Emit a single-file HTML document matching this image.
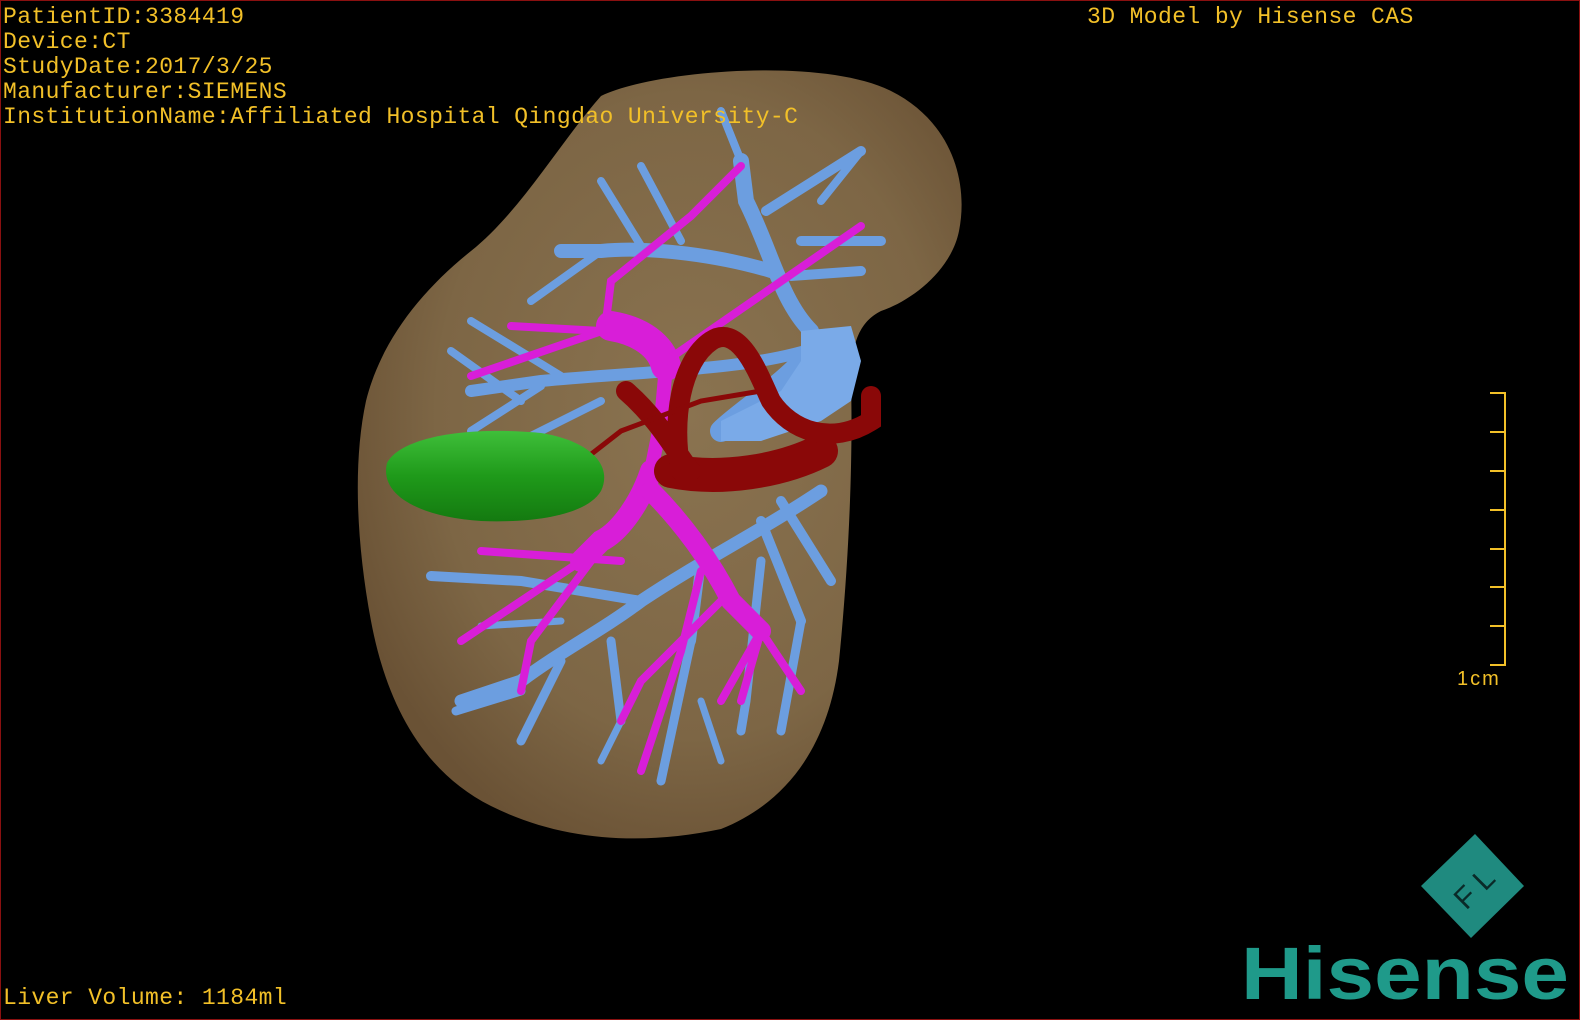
<!DOCTYPE html>
<html><head><meta charset="utf-8"><style>
html,body{margin:0;padding:0;background:#000;width:1580px;height:1020px;overflow:hidden}
.wrap{position:relative;width:1578px;height:1018px;border:1px solid #8a1010;background:#000}
.t{position:absolute;left:2px;color:#f2c028;font:23px/25px "Liberation Mono","DejaVu Sans Mono",monospace;letter-spacing:0.4px;white-space:pre}
svg{position:absolute;left:0;top:0}
</style></head><body><div class="wrap">
<svg width="1578" height="1018" viewBox="0 0 1578 1018">
<defs>
<radialGradient id="lv" cx="0.55" cy="0.45" r="0.6"><stop offset="0" stop-color="#8a7350"/><stop offset="0.7" stop-color="#7d6645"/><stop offset="1" stop-color="#6a5235"/></radialGradient>
<linearGradient id="gb" x1="0" y1="0" x2="0" y2="1"><stop offset="0" stop-color="#3fbf3a"/><stop offset="0.5" stop-color="#1f9a1a"/><stop offset="1" stop-color="#147a10"/></linearGradient>
</defs>
<path fill="url(#lv)" d="M600,95 C650,70 820,55 890,90 C950,120 968,180 958,230 C950,270 910,300 880,310 C860,320 850,340 850,380 C852,460 848,560 838,660 C828,740 790,800 720,828 C640,845 560,840 490,805 C420,770 385,700 370,620 C355,540 352,460 365,400 C380,340 420,290 470,250 C520,210 560,140 600,95 Z"/>
<g fill="none" stroke="#6c9ee0" stroke-linecap="round">
<path stroke-width="16" d="M810,330 C780,300 770,250 745,200 L740,160"/>
<path stroke-width="14" d="M770,270 C720,255 650,245 600,250 L560,250"/>
<path stroke-width="10" d="M765,210 L860,150 M800,240 L880,240 M790,275 L860,270"/>
<path stroke-width="8" d="M600,250 L530,300 M640,245 L600,180 M680,240 L640,165 M740,160 L720,110 M820,200 L860,150"/>
<path stroke-width="22" d="M820,340 C790,380 740,410 720,430"/>
<path stroke-width="12" d="M820,345 C750,370 640,370 540,380 L470,390"/>
<path stroke-width="8" d="M560,375 L470,320 M520,400 L450,350 M540,385 L470,430 M600,400 L520,440"/>
<path stroke-width="13" d="M820,490 C760,530 700,560 640,600 C600,630 560,650 520,680 L460,700"/>
<path stroke-width="10" d="M640,600 L520,580 L430,575 M700,560 L690,640 M760,520 L800,620 M780,500 L830,580"/>
<path stroke-width="9" d="M760,560 L745,700 L740,730 M690,640 L660,780 M610,640 L620,720 M560,660 L520,740 M520,690 L455,710 M800,620 L780,730"/>
<path stroke-width="7" d="M560,620 L480,625 M630,700 L600,760 M700,700 L720,760"/>
</g>
<path fill="#7aaae8" d="M800,330 L850,325 L860,360 L850,400 L820,420 L760,440 L720,440 L720,420 L780,390 L800,360 Z"/>
<g fill="none" stroke="#d81ed8" stroke-linecap="round">
<path stroke-width="30" d="M610,325 C640,330 660,345 665,365"/>
<path stroke-width="14" d="M665,365 L660,420 L650,470"/>
<path stroke-width="22" d="M650,470 C640,500 620,530 600,540 L580,560"/>
<path stroke-width="20" d="M650,490 C680,520 710,560 730,600 L760,630"/>
<path stroke-width="8" d="M605,320 L610,280 L690,215 L740,165 M630,320 L470,375 M665,360 L860,225 M600,330 L510,325 M590,560 L530,640 L520,690 M620,560 L480,550 M700,570 L680,650 L640,770 M760,630 L800,690 M760,630 L740,700 M720,600 L640,680 L620,720 M760,630 L720,700 M580,560 L460,640"/>
</g>
<g fill="none" stroke="#8a0808" stroke-linecap="round">
<path stroke-width="34" d="M670,470 C720,480 780,470 820,450"/>
<path stroke-width="20" d="M625,390 C660,420 680,460 690,470 M680,470 C670,420 680,360 710,340 C740,320 760,380 770,400 C790,430 830,445 870,420 L870,395"/>
<path stroke-width="5" d="M575,465 L620,430 L700,400 L760,390"/>
</g>
<path fill="url(#gb)" d="M386,462 C400,435 470,425 540,432 C590,440 612,465 600,490 C585,515 530,522 480,520 C420,516 378,495 386,462 Z"/>
<path fill="#1f8a7f" d="M1420,885 L1474,833 L1523,885 L1470,937 Z"/>
<text x="1472" y="898" fill="#0a2a28" font-family="Liberation Sans,sans-serif" font-size="30" text-anchor="middle" transform="rotate(-45 1472 886)">F L</text>
<text x="1240" y="998" fill="#1f9a8a" font-family="Liberation Sans,sans-serif" font-weight="bold" font-size="74" textLength="328" lengthAdjust="spacingAndGlyphs">Hisense</text>
<g stroke="#f2c028" stroke-width="2" fill="none">
<path d="M1489,392 L1504,392 L1504,664 L1489,664 M1489,431 L1504,431 M1489,470 L1504,470 M1489,509 L1504,509 M1489,548 L1504,548 M1489,586 L1504,586 M1489,625 L1504,625"/>
</g>
<text x="1456" y="684" fill="#f2c028" font-family="Liberation Sans,sans-serif" font-size="20" letter-spacing="2">1cm</text>
</svg>
<div class="t" style="top:4px">PatientID:3384419
Device:CT
StudyDate:2017/3/25
Manufacturer:SIEMENS
InstitutionName:Affiliated Hospital Qingdao University-C</div>
<div class="t" style="left:1086px;top:4px">3D Model by Hisense CAS</div>
<div class="t" style="top:985px">Liver Volume: 1184ml</div>
</div></body></html>
